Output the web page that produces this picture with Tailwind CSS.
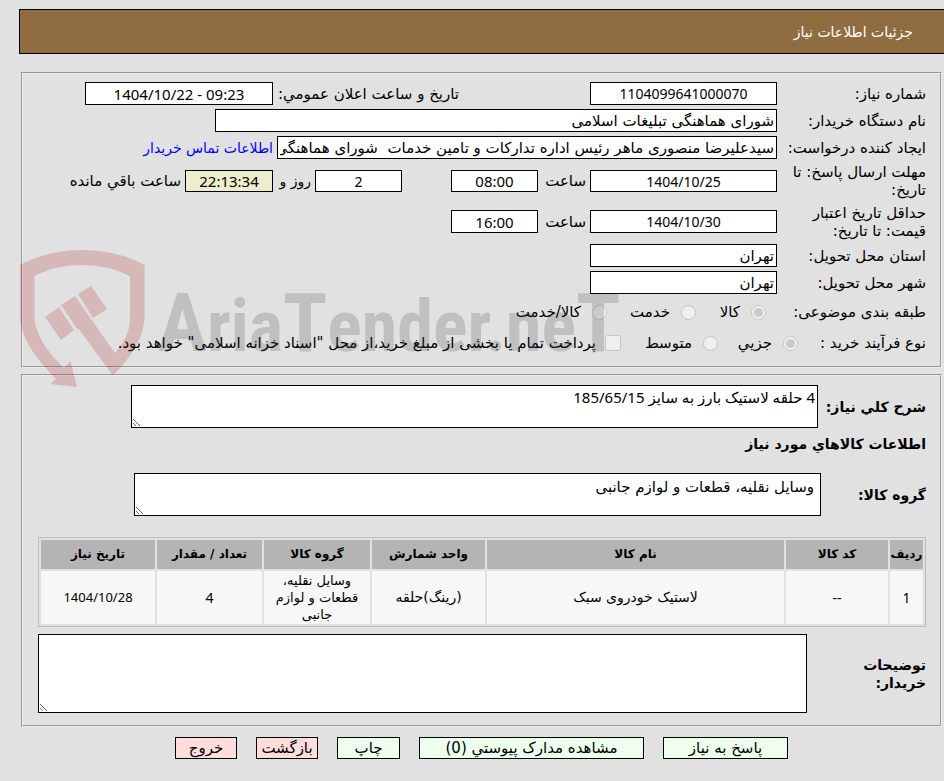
<!DOCTYPE html>
<html lang="fa" dir="rtl">
<head>
  <meta charset="UTF-8">
  <meta name="viewport" content="width=device-width, initial-scale=1.0">
  <title>جزئیات اطلاعات نیاز</title>
  <script src="https://cdn.jsdelivr.net/npm/@tailwindcss/browser@4"></script>
</head>
<body class="bg-[#e1e1e1] text-black text-[15px] leading-[18px] font-['DejaVu_Sans',sans-serif]">

  <header class="mt-[9px] ml-[19px] h-[45px] flex items-center pr-[31px] bg-[#8f6d41] text-white text-[14px] border border-r-0 border-black">
    <h1>جزئیات اطلاعات نیاز</h1>
  </header>

  <main class="relative mt-[18px] ml-[21px] mr-[2px]">

    <section class="border-2 border-[#ececec] [border-style:groove] px-[14px] pt-2 pb-[10px] flex flex-col gap-1">
      <div class="flex items-center">
        <label for="need-no" class="w-[149px] shrink-0">شماره نیاز:</label>
        <input id="need-no" class="w-[187px] h-[23px] bg-white border border-black text-center text-[14px] font-['Noto_Sans',sans-serif]" value="1104099641000070" readonly>
        <label for="announce" class="mr-[131px] w-[186px] shrink-0 whitespace-nowrap">تاریخ و ساعت اعلان عمومي:</label>
        <input id="announce" dir="ltr" class="w-[188px] h-[23px] bg-white border border-black text-center font-['Noto_Sans',sans-serif]" value="1404/10/22 - 09:23" readonly>
      </div>
      <div class="flex items-center">
        <label for="buyer" class="w-[149px] shrink-0">نام دستگاه خریدار:</label>
        <input id="buyer" class="w-[562px] h-[23px] px-[2px] bg-white border border-black" value="شورای هماهنگی تبلیغات اسلامی" readonly>
      </div>
      <div class="flex items-center">
        <label for="creator" class="w-[149px] shrink-0 whitespace-nowrap">ایجاد کننده درخواست:</label>
        <input id="creator" class="w-[500px] h-[23px] px-[2px] bg-white border border-black" value="سیدعلیرضا منصوری ماهر رئیس اداره تدارکات و تامین خدمات  شورای هماهنگی" readonly>
        <a href="#" class="mr-1 text-[#0000ff] text-[14px] whitespace-nowrap">اطلاعات تماس خریدار</a>
      </div>
      <div class="flex items-center">
        <label for="deadline" class="w-[149px] shrink-0">مهلت ارسال پاسخ: تا<br>تاریخ:</label>
        <input id="deadline" class="w-[187px] h-[22px] bg-white border border-black text-center text-[14px] font-['Noto_Sans',sans-serif]" value="1404/10/25" readonly>
        <label for="deadline-time" class="mr-1 w-12 shrink-0">ساعت</label>
        <input id="deadline-time" class="w-[87px] h-[22px] bg-white border border-black text-center font-['Noto_Sans',sans-serif]" value="08:00" readonly>
        <input id="days" class="mr-[49px] w-[87px] h-[22px] bg-white border border-black text-center text-[14px] font-['Noto_Sans',sans-serif]" value="2" readonly>
        <label for="days" class="mr-1 w-[38px] shrink-0 whitespace-nowrap text-[14px]">روز و</label>
        <input id="remaining" class="w-[88px] h-[22px] bg-[#eeeecc] border border-black text-center font-['Noto_Sans',sans-serif]" value="22:13:34" readonly>
        <label for="remaining" class="mr-1 whitespace-nowrap">ساعت باقي مانده</label>
      </div>
      <div class="flex items-center h-[37px]">
        <label for="validity" class="w-[149px] shrink-0">حداقل تاریخ اعتبار<br>قیمت: تا تاریخ:</label>
        <input id="validity" class="w-[187px] h-[23px] bg-white border border-black text-center text-[14px] font-['Noto_Sans',sans-serif]" value="1404/10/30" readonly>
        <label for="validity-time" class="mr-1 w-12 shrink-0">ساعت</label>
        <input id="validity-time" class="w-[87px] h-[23px] bg-white border border-black text-center font-['Noto_Sans',sans-serif]" value="16:00" readonly>
      </div>
      <div class="flex items-center">
        <label for="province" class="w-[149px] shrink-0">استان محل تحویل:</label>
        <input id="province" class="w-[187px] h-[23px] px-[2px] bg-white border border-black" value="تهران" readonly>
      </div>
      <div class="flex items-center">
        <label for="city" class="w-[149px] shrink-0">شهر محل تحویل:</label>
        <input id="city" class="w-[187px] h-[23px] px-[2px] bg-white border border-black" value="تهران" readonly>
      </div>
      <div class="flex items-center h-7 whitespace-nowrap" role="radiogroup" aria-label="طبقه بندی موضوعی">
        <span class="w-[160px] shrink-0">طبقه بندی موضوعی:</span>
        <label class="w-[70px] flex items-center gap-[11px]"><input type="radio" name="subject" class="size-[15px] shrink-0" checked disabled>کالا</label>
        <label class="w-[89px] flex items-center gap-[11px]"><input type="radio" name="subject" class="size-[15px] shrink-0" disabled>خدمت</label>
        <label class="flex items-center gap-[11px]"><input type="radio" name="subject" class="size-[15px] shrink-0" disabled>کالا/خدمت</label>
      </div>
      <div class="flex items-center h-[26px] whitespace-nowrap">
        <span class="w-32 shrink-0">نوع فرآیند خرید :</span>
        <label class="w-20 flex items-center gap-[11px]"><input type="radio" name="process" class="size-[15px] shrink-0" checked disabled>جزيي</label>
        <label class="w-[97px] flex items-center gap-[11px]"><input type="radio" name="process" class="size-[15px] shrink-0" disabled>متوسط</label>
        <label class="flex items-center gap-[9px]"><input type="checkbox" class="size-4 shrink-0" disabled>پرداخت تمام یا بخشی از مبلغ خرید،از محل "اسناد خزانه اسلامی" خواهد بود.</label>
      </div>
    </section>

    <section class="mt-[6px] border-2 border-[#ececec] [border-style:groove] pr-[14px] pl-[15px] pt-[9px] pb-3">
      <div class="flex items-center">
        <label for="summary" class="w-[108px] shrink-0 font-bold text-[14px] whitespace-nowrap">شرح کلي نیاز:</label>
        <textarea id="summary" class="w-[687px] h-[43px] px-[2px] pt-[2px] bg-white border border-black overflow-hidden font-['Noto_Sans','DejaVu_Sans',sans-serif]" readonly>4 حلقه لاستیک بارز به سایز 185/65/15</textarea>
      </div>
      <h2 class="mt-[7px] font-bold text-[14px]">اطلاعات کالاهاي مورد نیاز</h2>
      <div class="flex items-center mt-5">
        <label for="group" class="w-[105px] shrink-0 font-bold text-[14px]">گروه کالا:</label>
        <textarea id="group" class="w-[687px] h-[43px] px-[6px] pt-1 bg-white border border-black overflow-hidden" readonly>وسایل نقلیه، قطعات و لوازم جانبی</textarea>
      </div>
      <table class="mt-[21px] w-full table-fixed border border-[#bbbbbb] border-separate border-spacing-[2px] text-[14px] leading-[17px] text-center">
        <thead class="text-[12px]">
          <tr class="h-[29px] bg-[#b4b4b4]">
            <th class="w-[33px]">ردیف</th>
            <th class="w-[102px]">کد کالا</th>
            <th>نام کالا</th>
            <th class="w-[113px]">واحد شمارش</th>
            <th class="w-[106px]">گروه کالا</th>
            <th class="w-[105px]">تعداد / مقدار</th>
            <th class="w-[114px]">تاریخ نیاز</th>
          </tr>
        </thead>
        <tbody>
          <tr class="h-[53px] bg-[#f7f7f7]">
            <td class="font-['Noto_Sans',sans-serif]">1</td>
            <td class="font-['Noto_Sans',sans-serif]">--</td>
            <td>لاستیک خودروی سبک</td>
            <td>(رینگ)حلقه</td>
            <td class="px-2 text-[13px]">وسایل نقلیه، قطعات و لوازم جانبی</td>
            <td class="font-['Noto_Sans',sans-serif]">4</td>
            <td class="text-[13px] font-['Noto_Sans',sans-serif]">1404/10/28</td>
          </tr>
        </tbody>
      </table>
      <div class="flex items-center mt-[7px]">
        <label for="notes" class="w-[119px] shrink-0 font-bold text-[14px]">توضیحات<br>خریدار:</label>
        <textarea id="notes" class="grow h-[79px] bg-white border border-black" readonly></textarea>
      </div>
    </section>

    <!-- watermark -->
    <svg class="absolute left-[-1px] top-[176px] w-[600px] h-[140px] pointer-events-none" viewBox="20 248 600 140" direction="ltr" aria-hidden="true">
      <g fill="#aa1418" fill-opacity=".2">
        <path d="M20 265Q48 250 82 250Q117 250 144.500 265V318C144 338 128 361 113 375.500L78 328L91 319L115 353C124 343 130 332 130 318V276Q108 265 82 265Q55 265 34.500 276V318C36 338 51 355 64 368L70.500 361L77 387L50.500 384L56 379C40 363 21 340 20 318Z"/>
        <path d="M45 317L59 307L74 330L61 340ZM61 305L75 296L91 319L77 329ZM78 294L91 286L107 309L93 318Z"/>
      </g>
      <text x="158" y="351" fill="#3c3c3c" fill-opacity=".2" font-family="Roboto Condensed, Roboto, sans-serif" font-weight="bold" font-size="72"><tspan font-size="82">A</tspan>ria<tspan font-size="82">T</tspan>ender.ne<tspan font-size="82">T</tspan></text>
    </svg>
  </main>

  <footer class="mt-[10px] ml-[21px] mr-[2px] flex justify-center gap-[19px]">
    <button class="w-[125px] h-[22px] bg-[#eeffee] border border-black">پاسخ به نیاز</button>
    <button class="w-[225px] h-[22px] bg-[#eeffee] border border-black">مشاهده مدارک پيوستي (0)</button>
    <button class="w-[63px] h-[22px] bg-[#eeffee] border border-black">چاپ</button>
    <button class="w-[62px] h-[22px] bg-[#ffdddd] border border-black">بازگشت</button>
    <button class="w-[62px] h-[22px] bg-[#ffdddd] border border-black">خروج</button>
  </footer>

</body>
</html>
